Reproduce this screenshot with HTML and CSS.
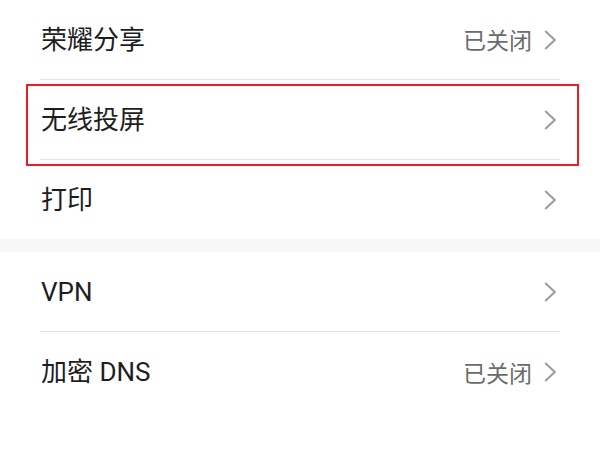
FILE: index.html
```html
<!DOCTYPE html>
<html lang="zh-CN">
<head>
<meta charset="utf-8">
<title>设置</title>
<link rel="stylesheet" href="styles.css">
</head>
<body>
<div class="page">
  <section class="group">
    <div class="row">
      <div class="row-inner divided">
        <span class="title">荣耀分享</span>
        <span class="value">已关闭</span>
        <svg class="chev" width="12" height="20" viewBox="0 0 12 20"><polyline points="1.2,1 10.8,10 1.2,19" fill="none" stroke="#9a9a9a" stroke-width="2"/></svg>
      </div>
    </div>
    <div class="row">
      <div class="row-inner divided">
        <span class="title">无线投屏</span>
        <svg class="chev" width="12" height="20" viewBox="0 0 12 20"><polyline points="1.2,1 10.8,10 1.2,19" fill="none" stroke="#9a9a9a" stroke-width="2"/></svg>
      </div>
    </div>
    <div class="row last">
      <div class="row-inner">
        <span class="title">打印</span>
        <svg class="chev" width="12" height="20" viewBox="0 0 12 20"><polyline points="1.2,1 10.8,10 1.2,19" fill="none" stroke="#9a9a9a" stroke-width="2"/></svg>
      </div>
    </div>
  </section>
  <div class="band"></div>
  <section class="group">
    <div class="row">
      <div class="row-inner divided">
        <span class="title">VPN</span>
        <svg class="chev" width="12" height="20" viewBox="0 0 12 20"><polyline points="1.2,1 10.8,10 1.2,19" fill="none" stroke="#9a9a9a" stroke-width="2"/></svg>
      </div>
    </div>
    <div class="row">
      <div class="row-inner">
        <span class="title">加密 DNS</span>
        <span class="value">已关闭</span>
        <svg class="chev" width="12" height="20" viewBox="0 0 12 20"><polyline points="1.2,1 10.8,10 1.2,19" fill="none" stroke="#9a9a9a" stroke-width="2"/></svg>
      </div>
    </div>
  </section>
  <div class="highlight"></div>
</div>
</body>
</html>
```

FILE: styles.css
```css
html, body {
  margin: 0;
  padding: 0;
  background: #ffffff;
}

.page {
  position: relative;
  width: 600px;
  height: 450px;
  overflow: hidden;
  background: #ffffff;
  font-family: Roboto, "Noto Sans CJK SC", sans-serif;
}

.group {
  display: flex;
  flex-direction: column;
}

.row {
  height: 80px;
  padding: 0 40px;
  box-sizing: border-box;
}

.row.last {
  height: 79px;
}

.row-inner {
  height: 100%;
  display: flex;
  align-items: center;
  padding-right: 4px;
  box-sizing: border-box;
}

.row-inner.divided {
  border-bottom: 1px solid #e3e3e3;
}

.title {
  flex: 1;
  font-size: 26px;
  color: #1e1e1e;
  line-height: 1;
  padding-left: 1px;
}

.value {
  font-family: "Noto Sans CJK SC", sans-serif;
  font-size: 23px;
  color: #6b6b6b;
  line-height: 1;
  margin-right: 12px;
}

.chev {
  display: block;
  flex: none;
}

.band {
  height: 13px;
  background: #f7f7f7;
}

.highlight {
  position: absolute;
  left: 26px;
  top: 84px;
  width: 553px;
  height: 82px;
  box-sizing: border-box;
  border: 2px solid #f01c24;
}
```
